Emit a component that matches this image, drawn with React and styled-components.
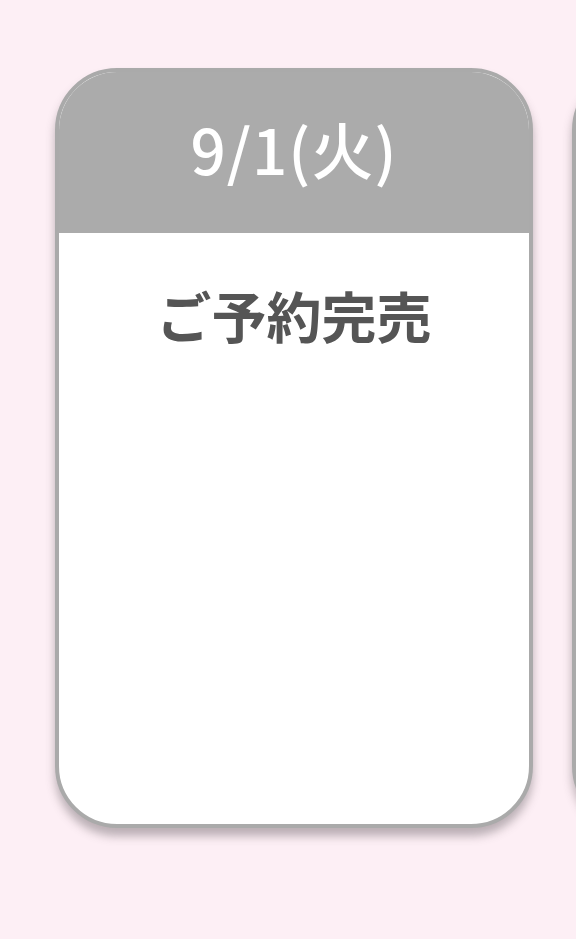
import React from 'react'
import styled, { createGlobalStyle } from 'styled-components'

const GlobalStyle = createGlobalStyle`
    html, body {
        margin: 0;
        padding: 0;
        background: #fdeff5;
        overflow: hidden;
    }
    body {
        font-family: "Noto Sans CJK JP", "Noto Sans", sans-serif;
    }
`

const Page = styled.div`
    width: 576px;
    height: 939px;
    overflow: hidden;
`

const Row = styled.div`
    display: flex;
    gap: 39px;
    padding: 68px 0 0 55px;
`

const Card = styled.div`
    flex: 0 0 478px;
    height: 760px;
    box-sizing: border-box;
    border: 4px solid #aaaaaa;
    border-radius: 62px;
    background: #ffffff;
    overflow: hidden;
    display: flex;
    flex-direction: column;
    box-shadow: 0 8px 10px rgba(80, 70, 75, 0.38);
`

const Header = styled.div`
    height: 161px;
    background: #ababab;
    display: flex;
    align-items: center;
    justify-content: center;
    color: #ffffff;
    font-size: 62px;
    font-weight: 500;
    letter-spacing: 1px;
    padding-bottom: 10px;
    box-sizing: border-box;
`

const Body = styled.div`
    flex: 1;
    display: flex;
    flex-direction: column;
    align-items: center;
    padding-top: 48px;
`

const Status = styled.div`
    color: #555555;
    font-size: 55px;
    font-weight: 700;
    line-height: 1.2;
`

const days = [
    { date: '9/1(火)', status: 'ご予約完売' },
    { date: '9/2(水)', status: 'ご予約完売' },
]

export default function App() {
    return (
        <Page>
            <GlobalStyle />
            <Row>
                {days.map(day => (
                    <Card key={day.date}>
                        <Header>{day.date}</Header>
                        <Body>
                            <Status>{day.status}</Status>
                        </Body>
                    </Card>
                ))}
            </Row>
        </Page>
    )
}
